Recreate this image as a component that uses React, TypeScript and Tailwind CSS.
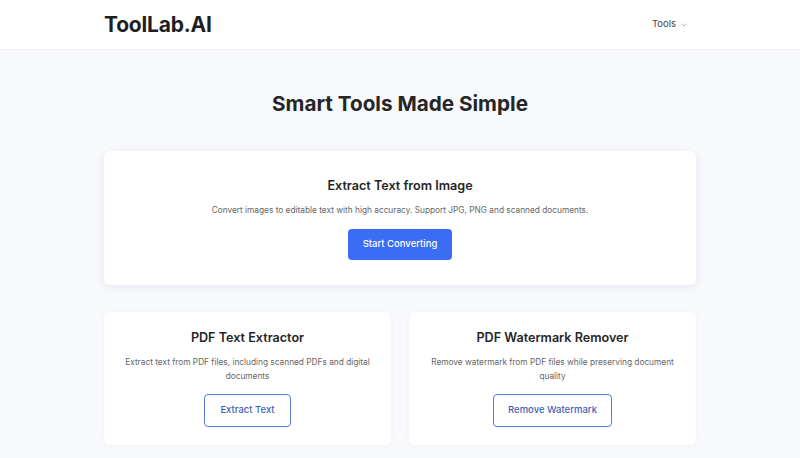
import React from "react";

export default function App() {
  return (
    <div className="min-h-[458px] bg-[#f8f9fc] text-[#222]" style={{ fontFamily: "Inter, 'Noto Sans', sans-serif" }}>
      <header className="h-[50px] bg-white border-b border-[#eef0f4]">
        <div className="mx-auto flex h-full max-w-[592px] items-center justify-between">
          <div className="text-[21px] font-bold tracking-[-0.2px] text-[#1f1f1f]">ToolLab.AI</div>
          <div className="mr-[8px] flex items-center gap-[4px] text-[9.5px] text-[#444]">
            Tools
            <svg width="8" height="8" viewBox="0 0 24 24" fill="none" stroke="#aaa" strokeWidth="2.5" strokeLinecap="round" strokeLinejoin="round">
              <path d="M6 9l6 6 6-6" />
            </svg>
          </div>
        </div>
      </header>
      <main className="mx-auto max-w-[592px] pt-[42px]">
        <h1 className="text-center text-[20.7px] font-bold leading-[24px] text-[#262626]">Smart Tools Made Simple</h1>
        <section className="mt-[35px] flex h-[134px] flex-col items-center rounded-[6px] bg-white pt-[27px] shadow-[0_2px_10px_rgba(20,30,60,0.08)]">
          <h2 className="text-[12.6px] font-semibold leading-[16px] text-[#262626]">Extract Text from Image</h2>
          <p className="mt-[10px] text-[8.3px] leading-[12px] text-[#666]">
            Convert images to editable text with high accuracy. Support JPG, PNG and scanned documents.
          </p>
          <button className="mt-[13px] h-[31px] w-[104px] rounded-[4px] bg-[#3a6cf4] text-[9.5px] font-medium text-white">
            Start Converting
          </button>
        </section>
        <div className="mt-[27px] grid grid-cols-2 gap-[18px]">
          <Card title="PDF Text Extractor" desc="Extract text from PDF files, including scanned PDFs and digital documents" button="Extract Text" w="w-[87px]" />
          <Card title="PDF Watermark Remover" desc="Remove watermark from PDF files while preserving document quality" button="Remove Watermark" w="w-[119px]" />
        </div>
      </main>
    </div>
  );
}

function Card({ title, desc, button, w }: { title: string; desc: string; button: string; w: string }) {
  return (
    <section className="flex h-[133px] flex-col items-center rounded-[6px] bg-white px-[18px] pt-[18px] shadow-[0_1px_6px_rgba(20,30,60,0.04)]">
      <h3 className="text-[12.6px] font-semibold leading-[16px] text-[#262626]">{title}</h3>
      <p className="mt-[9px] text-center text-[8.3px] leading-[14px] text-[#666]">{desc}</p>
      <button className={`mt-[11px] h-[33px] ${w} rounded-[4px] border border-[#5a7cd6] bg-white text-[9.5px] font-medium text-[#3f5fb8]`}>
        {button}
      </button>
    </section>
  );
}
